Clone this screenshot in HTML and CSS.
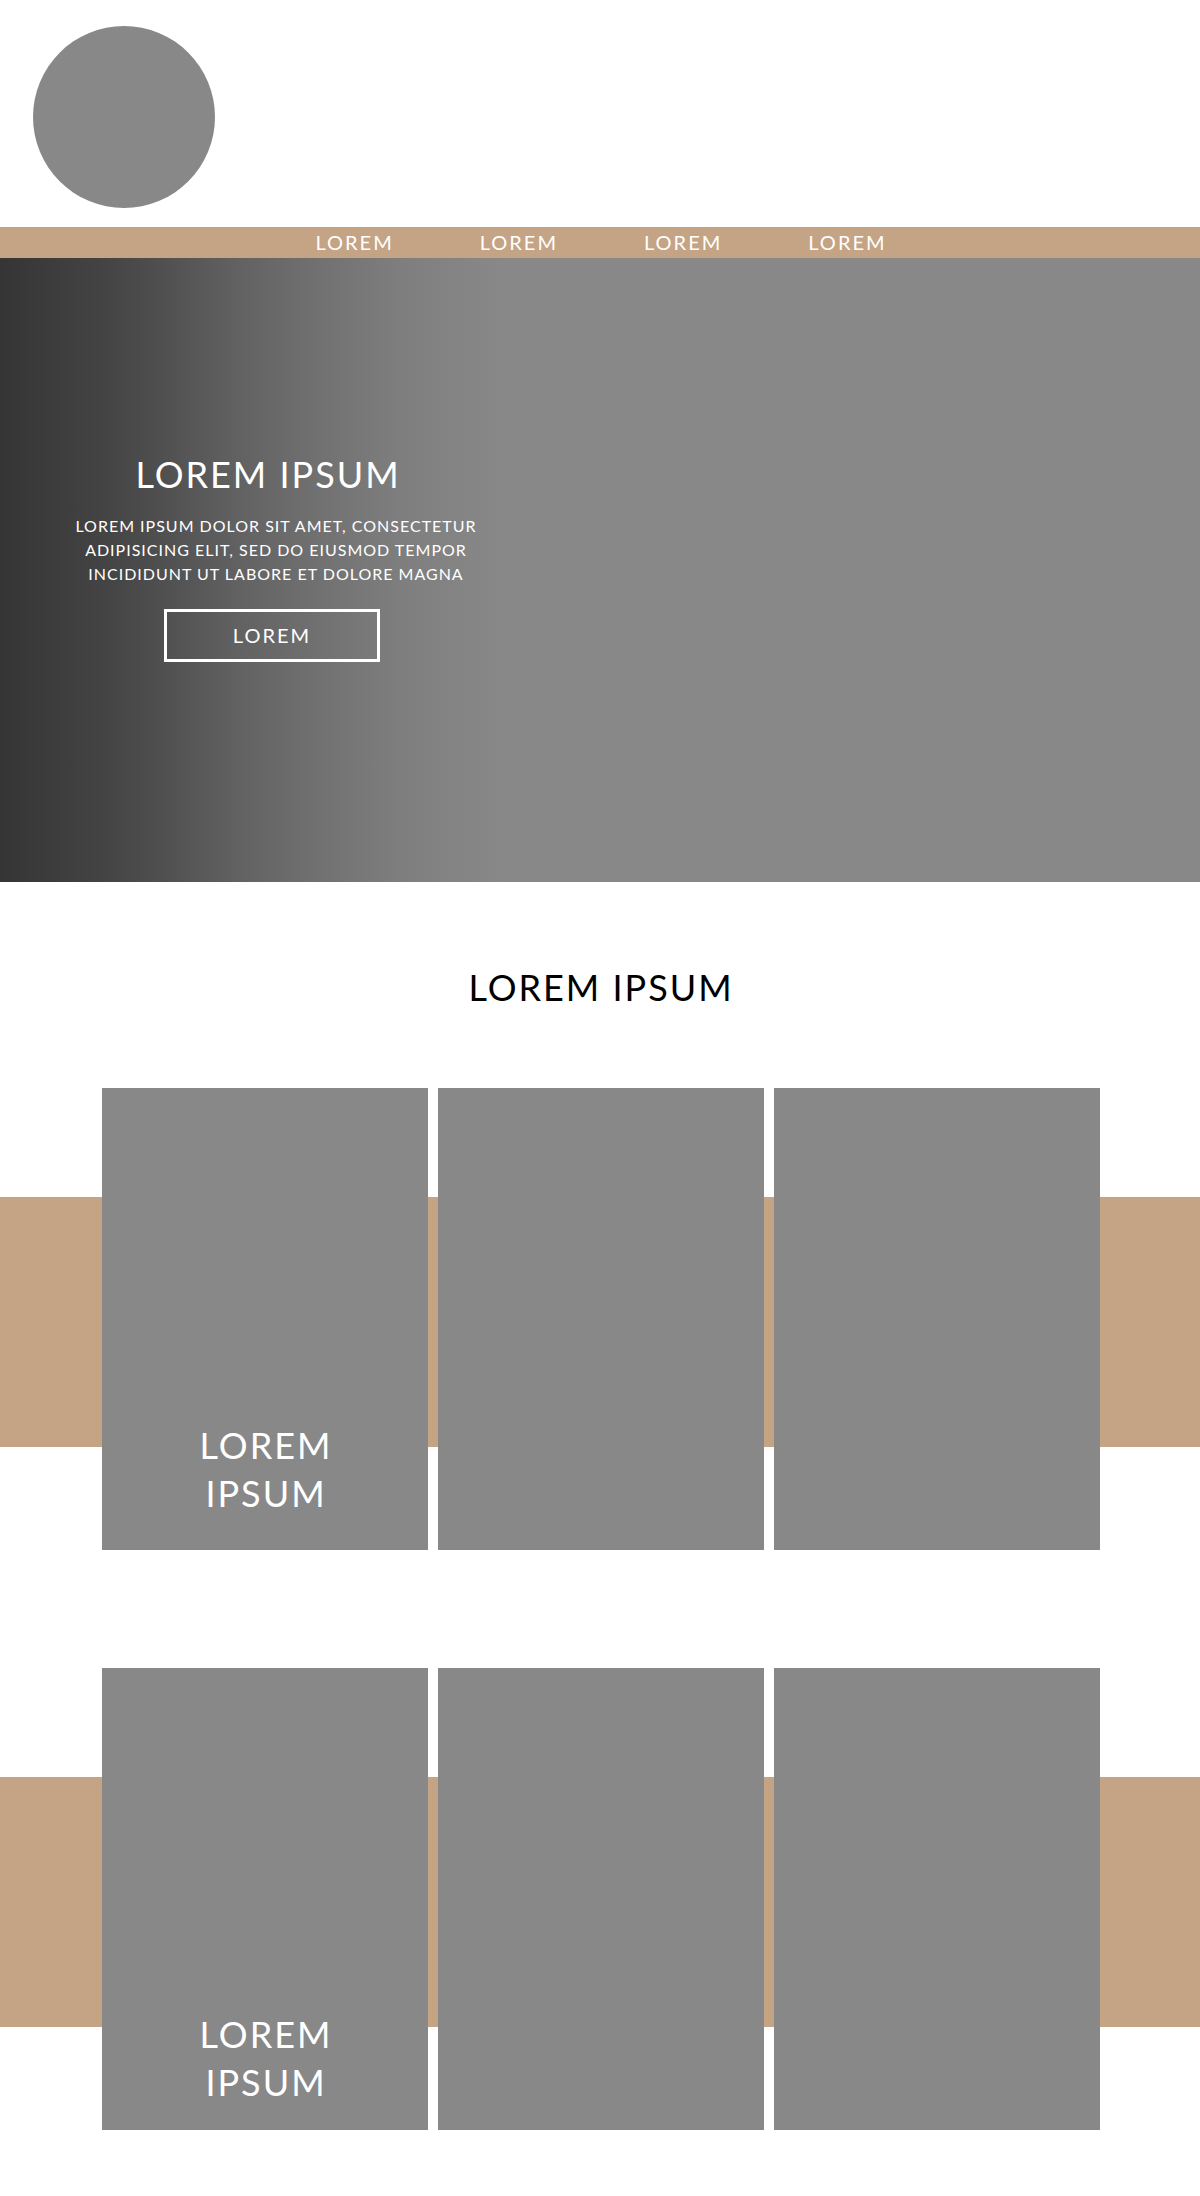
FILE: index.html
```html
<!DOCTYPE html>
<html lang="en">
<head>
<meta charset="utf-8">
<meta name="viewport" content="width=device-width, initial-scale=1">
<title>Lorem Ipsum</title>
<link rel="stylesheet" href="styles.css">
</head>
<body>
<header class="header">
  <div class="logo"></div>
</header>
<nav class="nav">
  <a class="nav-link" href="#">LOREM</a>
  <a class="nav-link" href="#">LOREM</a>
  <a class="nav-link" href="#">LOREM</a>
  <a class="nav-link" href="#">LOREM</a>
</nav>
<main>
  <section class="hero">
    <div class="hero-content">
      <h1 class="heading hero-title">LOREM IPSUM</h1>
      <p class="hero-text">LOREM IPSUM DOLOR SIT AMET, CONSECTETUR<br>ADIPISICING ELIT, SED DO EIUSMOD TEMPOR<br>INCIDIDUNT UT LABORE ET DOLORE MAGNA</p>
      <button class="hero-button" type="button">LOREM</button>
    </div>
  </section>
  <h2 class="heading section-title">LOREM IPSUM</h2>
  <section class="gallery">
    <article class="card"><h3 class="heading">LOREM<br>IPSUM</h3></article>
    <article class="card"></article>
    <article class="card"></article>
  </section>
  <section class="gallery gallery-low">
    <article class="card"><h3 class="heading">LOREM<br>IPSUM</h3></article>
    <article class="card"></article>
    <article class="card"></article>
  </section>
</main>
</body>
</html>
```

FILE: styles.css
```css
:root {
  --tan: #c4a484;
  --gray: #888;
}

* {
  box-sizing: border-box;
}

body {
  margin: 0;
  background: #fff;
  color: #000;
  font-family: Lato, "Open Sans", sans-serif;
}

/* left padding balances the tracking after the last letter */
.heading {
  margin: 0;
  padding-left: 2px;
  font-size: 36px;
  font-weight: 400;
  line-height: 48px;
  letter-spacing: 2px;
  text-align: center;
}

.header {
  padding: 26px 33px 19px;
}

.logo {
  width: 182px;
  height: 182px;
  border-radius: 50%;
  background: var(--gray);
}

.nav {
  display: flex;
  justify-content: center;
  gap: 86px;
  padding-left: 2px;
  background: var(--tan);
}

.nav-link {
  color: #fff;
  font-size: 20px;
  line-height: 31px;
  letter-spacing: 2px;
  text-decoration: none;
}

.hero {
  min-height: 624px;
  padding: 192px 64px 220px;
  background: linear-gradient(to right, #353535 0, #434343 100px, #4d4d4d 150px, #626262 240px, #717171 320px, #7e7e7e 400px, #888 500px);
  color: #fff;
}

.hero-content {
  display: flex;
  flex-direction: column;
  align-items: center;
  width: 416px;
}

.hero-title {
  padding: 0 8px 0 0;
}

.hero-text {
  margin: 16px 0 23px;
  padding-left: 8px;
  font-size: 16px;
  line-height: 24px;
  letter-spacing: 1px;
  text-align: center;
  white-space: nowrap;
}

.hero-button {
  width: 216px;
  padding: 8px 0;
  border: 3px solid #fff;
  background: transparent;
  color: #fff;
  font-family: inherit;
  font-size: 20px;
  line-height: 31px;
  letter-spacing: 2px;
}

.section-title {
  padding: 81px 24px 77px 26px;
}

.gallery {
  display: grid;
  grid-template-columns: repeat(3, 1fr);
  gap: 10px;
  margin-bottom: 118px;
  padding: 0 100px 0 102px;
  background: linear-gradient(var(--tan), var(--tan)) 0 109px / 100% 250px no-repeat;
}

.card {
  display: flex;
  flex-direction: column;
  justify-content: flex-end;
  min-height: 462px;
  padding-bottom: 33px;
  background: var(--gray);
  color: #fff;
}

.gallery-low {
  margin-bottom: 66px;
}

.gallery-low .card {
  padding-bottom: 24px;
}
```
